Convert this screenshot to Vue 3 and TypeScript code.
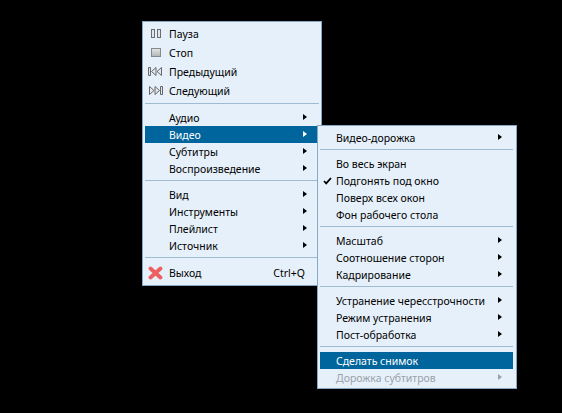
<script setup lang="ts">
type Item = { label?: string; icon?: string; arrow?: boolean; sel?: boolean; dis?: boolean; check?: boolean; sc?: string; sep?: boolean; tall?: boolean }
const main: Item[] = [
  { label: 'Пауза', icon: 'pause', tall: true },
  { label: 'Стоп', icon: 'stop', tall: true },
  { label: 'Предыдущий', icon: 'prev', tall: true },
  { label: 'Следующий', icon: 'next', tall: true },
  { sep: true },
  { label: 'Аудио', arrow: true },
  { label: 'Видео', arrow: true, sel: true },
  { label: 'Субтитры', arrow: true },
  { label: 'Воспроизведение', arrow: true },
  { sep: true },
  { label: 'Вид', arrow: true },
  { label: 'Инструменты', arrow: true },
  { label: 'Плейлист', arrow: true },
  { label: 'Источник', arrow: true },
  { sep: true },
  { label: 'Выход', icon: 'quit', sc: 'Ctrl+Q', tall: true },
]
const sub: Item[] = [
  { label: 'Видео-дорожка', arrow: true },
  { sep: true },
  { label: 'Во весь экран' },
  { label: 'Подгонять под окно', check: true },
  { label: 'Поверх всех окон' },
  { label: 'Фон рабочего стола' },
  { sep: true },
  { label: 'Масштаб', arrow: true },
  { label: 'Соотношение сторон', arrow: true },
  { label: 'Кадрирование', arrow: true },
  { sep: true },
  { label: 'Устранение чересстрочности', arrow: true },
  { label: 'Режим устранения', arrow: true },
  { label: 'Пост-обработка', arrow: true },
  { sep: true },
  { label: 'Сделать снимок', sel: true },
  { label: 'Дорожка субтитров', arrow: true, dis: true },
]
const menus = [
  { cls: 'main', items: main },
  { cls: 'sub', items: sub },
]
</script>

<template>
  <div class="desk">
    <div v-for="m in menus" :key="m.cls" class="menu" :class="m.cls">
      <template v-for="(it, i) in m.items" :key="i">
        <div v-if="it.sep" class="sep"></div>
        <div v-else class="row" :class="{ sel: it.sel, dis: it.dis, tall: it.tall }">
          <span class="ico">
            <svg v-if="it.icon === 'pause'" width="12" height="10" viewBox="0 0 12 10">
              <rect x="1.5" y="0.5" width="3" height="8" fill="#e2e6ea" stroke="#6a6d71" />
              <rect x="7.5" y="0.5" width="3" height="8" fill="#e2e6ea" stroke="#6a6d71" />
            </svg>
            <svg v-else-if="it.icon === 'stop'" width="12" height="10" viewBox="0 0 12 10">
              <defs>
                <linearGradient id="stopfill" x1="0" y1="0" x2="0" y2="1">
                  <stop offset="0" stop-color="#e4e6e8" />
                  <stop offset="1" stop-color="#b2b4b6" />
                </linearGradient>
              </defs>
              <rect x="1.5" y="0.5" width="9" height="8" fill="url(#stopfill)" stroke="#85888c" />
            </svg>
            <svg v-else-if="it.icon === 'prev'" width="15" height="10" viewBox="0 0 15 10">
              <path d="M0.5 0.5H2.5V8.5H0.5ZM8 0.5V8.5L3.5 4.5ZM13.5 0.5V8.5L9 4.5Z" fill="#e6e9ec" stroke="#64676b" />
            </svg>
            <svg v-else-if="it.icon === 'next'" width="15" height="10" viewBox="0 0 15 10">
              <path d="M14.5 0.5H12.5V8.5H14.5ZM7 0.5V8.5L11.5 4.5ZM1.5 0.5V8.5L6 4.5Z" fill="#e6e9ec" stroke="#64676b" />
            </svg>
            <svg v-else-if="it.icon === 'quit'" width="15" height="14" viewBox="0 0 15 14">
              <path d="M2.5 2.5L12.5 11.5M12.5 2.5L2.5 11.5" stroke="#ee5f60" stroke-width="3.8" stroke-linecap="round" />
            </svg>
            <svg v-else-if="it.check" class="chk" width="9" height="8" viewBox="0 0 9 8">
              <path d="M1 4L3.2 6.4L8 1" fill="none" stroke="#000" stroke-width="1.8" />
            </svg>
          </span>
          <span class="lbl">{{ it.label }}</span>
          <span v-if="it.sc" class="sc">{{ it.sc }}</span>
          <span v-if="it.arrow" class="arr"></span>
        </div>
      </template>
    </div>
  </div>
</template>

<style>
html, body { margin: 0; background: #000; }
</style>

<style scoped>
.desk {
  position: relative;
  width: 562px;
  height: 413px;
  background: #000;
  overflow: hidden;
  font-family: "Noto Sans", sans-serif;
  font-size: 10.5px;
  color: #000;
}
.menu {
  position: absolute;
  box-sizing: border-box;
  background: #e6f0fa;
  border: 1px solid #86a8c4;
}
.main { left: 142px; top: 21px; width: 180px; height: 265px; padding: 2px 2px 3px; }
.sub { left: 317px; top: 125px; width: 200px; height: 264px; padding: 3px 3px 2px 2px; }
.row {
  display: flex;
  align-items: center;
  height: 17px;
  padding-right: 12px;
  white-space: nowrap;
}
.sub .row { padding-right: 11px; }
.row.tall { height: 19px; }
.sel { background: #00659c; color: #fff; }
.dis { color: #9aa2a9; }
.ico {
  box-sizing: border-box;
  width: 24px;
  padding-right: 3px;
  flex: none;
  display: flex;
  align-items: center;
  justify-content: center;
}
.sub .ico { width: 16px; padding-right: 2px; }
.lbl { flex: 1; }
.sc { margin-right: 2px; }
.arr {
  width: 0;
  height: 0;
  border-left: 4px solid currentColor;
  border-top: 3.5px solid transparent;
  border-bottom: 3.5px solid transparent;
  margin-bottom: 2px;
}
.sep {
  height: 1px;
  margin: 3px 0 5px;
  background: #9dbbd1;
}
</style>
